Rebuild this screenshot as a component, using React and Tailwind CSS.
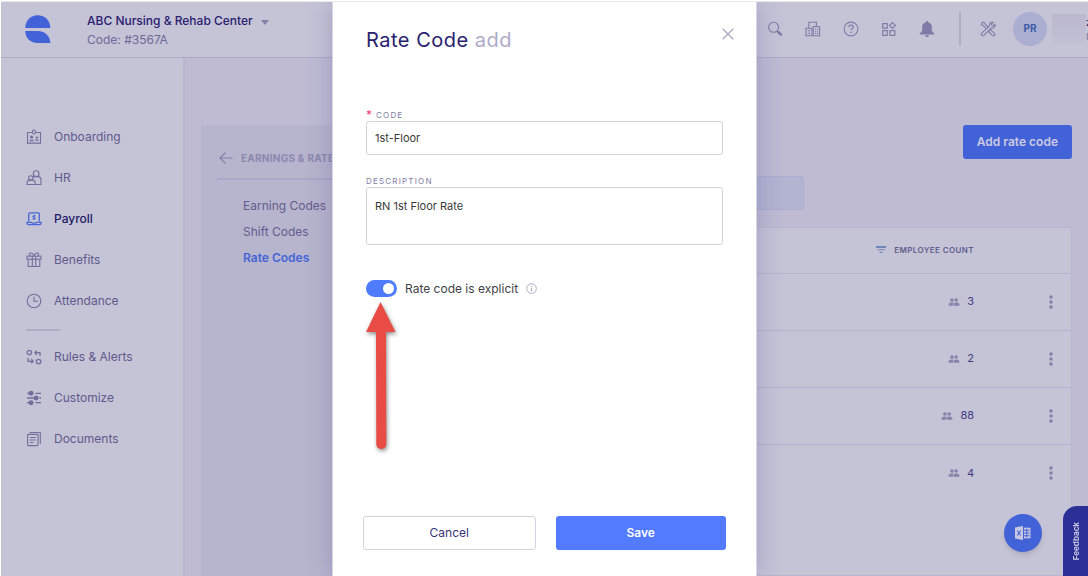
import { useState } from 'react'

const NAV_MAIN = [
  { label: 'Onboarding', icon: BadgeIcon },
  { label: 'HR', icon: PeopleIcon },
  { label: 'Payroll', icon: PayrollIcon, active: true },
  { label: 'Benefits', icon: GiftIcon },
  { label: 'Attendance', icon: ClockIcon },
]

const NAV_EXTRA = [
  { label: 'Rules & Alerts', icon: RulesIcon },
  { label: 'Customize', icon: SlidersIcon },
  { label: 'Documents', icon: DocumentsIcon },
]

const SUB_NAV = [
  { label: 'Earning Codes' },
  { label: 'Shift Codes' },
  { label: 'Rate Codes', active: true },
]

const ROWS = [3, 2, 88, 4]

function Icon({ size = 16, children, ...props }) {
  return (
    <svg
      width={size}
      height={size}
      viewBox="0 0 16 16"
      fill="none"
      stroke="currentColor"
      strokeWidth="1.1"
      aria-hidden="true"
      className="shrink-0"
      {...props}
    >
      {children}
    </svg>
  )
}

function BadgeIcon() {
  return (
    <Icon>
      <path d="M6.2 3.5H1.5v10.6h13V3.5H9.8" />
      <rect x="6.6" y="1" width="2.8" height="4" rx="1.2" />
      <circle cx="5.6" cy="8" r="1" fill="currentColor" />
      <path d="M3.6 11.5h4M9.4 8.5h3M9.4 11h3" strokeWidth="1.3" />
    </Icon>
  )
}

function PeopleIcon() {
  return (
    <Icon>
      <circle cx="10.2" cy="3.7" r="2.9" />
      <circle cx="4.8" cy="7.9" r="2.2" />
      <path d="M1 14.5v-1.4c0-1.700 1.300-3 3-3h2.200c1.700 0 3 1.300 3 3v1.400z" />
      <path d="M9.200 14.500H15v-4.700c0-1.800-1.300-3.200-3.100-3.200H8.700c-.6 0-1.100.2-1.600.6" />
    </Icon>
  )
}

function PayrollIcon() {
  return (
    <Icon>
      <path d="M2.700 10.500V2.700c0-.5.4-.9.9-.9h8.800c.5 0 .9.400.9.900v7.800" strokeWidth="1.3" />
      <path d="M1 11.300h4.500l.6.900h3.800l.6-.9H15v.7c0 .9-.7 1.600-1.600 1.600H2.600c-.9 0-1.600-.7-1.600-1.600z" strokeWidth="1.3" />
      <path d="M9.400 4.800H7.500c-1.100 0-1.100 1.500 0 1.500h1c1.100 0 1.100 1.600 0 1.600H6.600M8 3.700v5.300" strokeWidth="1" />
    </Icon>
  )
}

function GiftIcon() {
  return (
    <Icon>
      <rect x="1" y="4.2" width="14" height="3" />
      <path d="M2.200 7.200v7.300h11.600V7.200M6.300 4.200v10.300M9.700 4.200v10.300" />
      <path d="M8 4C7 1.500 5.500.700 4.300 1.100 2.900 1.600 3 3.600 4.500 4M8 4c1-2.500 2.500-3.300 3.700-2.900 1.400.5 1.300 2.500-.2 2.900" />
    </Icon>
  )
}

function ClockIcon() {
  return (
    <Icon>
      <circle cx="8" cy="8" r="6.8" />
      <path d="M8 3.800V8.200h4" />
    </Icon>
  )
}

function RulesIcon() {
  return (
    <Icon strokeWidth="1.3">
      <circle cx="3.3" cy="3.5" r="2.2" />
      <circle cx="12.6" cy="12.5" r="2.2" />
      <path d="M14 7V3.700H9M10.900 1.700 8.900 3.700l2 2" />
      <path d="M2 9v3.300h5M5.200 10.300l2 2-2 2" />
    </Icon>
  )
}

function SlidersIcon() {
  return (
    <Icon strokeWidth="1.3">
      <path d="M1 3.300h6.500M9.500 3.300H15M1 8h11.500M13.500 8H15M1 12.700h6.500M9.500 12.700H15" />
      <circle cx="5" cy="3.3" r="1.8" fill="currentColor" />
      <circle cx="10" cy="8" r="1.8" fill="currentColor" />
      <circle cx="5" cy="12.7" r="1.8" fill="currentColor" />
    </Icon>
  )
}

function DocumentsIcon() {
  return (
    <Icon>
      <rect x="1.6" y="3.4" width="10.4" height="11.2" rx=".6" />
      <path d="M3.500 1.500h10.800v11.500M3.800 6.500h6M3.800 9h6M3.800 11.500h3.700" />
    </Icon>
  )
}

function SearchIcon() {
  return (
    <Icon>
      <circle cx="6.6" cy="6.3" r="5" />
      <path d="M10 10.200l1.500 1.300" />
      <path d="M11.500 11.300l2.400 2.100" strokeWidth="2.6" strokeLinecap="round" />
    </Icon>
  )
}

function BuildingsIcon() {
  return (
    <Icon>
      <path d="M1 14.700V7.200h6v7.500zM3.800 7.200V1.200h7.600v4.200" />
      <path d="M8.300 14.700V5.500h6.300v9.200z" />
      <path d="M2.800 9.800h2.400M2.800 12.200h2.400M10 8h1.200M12 8h1.200M10 10.200h1.200M12 10.200h1.200M10 12.400h1.200M12 12.400h1.200" />
    </Icon>
  )
}

function HelpIcon() {
  return (
    <Icon>
      <circle cx="8" cy="8" r="6.9" />
      <path d="M5.900 6.200c0-2.700 4.300-2.700 4.300 0 0 1.500-2.100 1.500-2.100 3.100" strokeWidth="1.2" />
      <circle cx="8.1" cy="11.3" r=".5" fill="currentColor" strokeWidth=".5" />
    </Icon>
  )
}

function AppsIcon() {
  return (
    <Icon strokeWidth="1.2">
      <rect x="1.7" y="2.6" width="4.5" height="4.5" />
      <rect x="1.7" y="9.6" width="4.5" height="4.8" />
      <rect x="9" y="9.6" width="4.8" height="4.8" />
      <path d="M11.500 1.700l2.900 2.900-2.900 2.900-2.900-2.900z" />
    </Icon>
  )
}

function BellIcon() {
  return (
    <Icon fill="currentColor" stroke="none">
      <path d="M8 0c-.7 0-1.100.500-1.100 1.200C4.500 1.800 3.100 3.700 3.100 6.200v3.900L.8 12.400v1h14.400v-1l-2.300-2.300V6.200c0-2.500-1.400-4.400-3.800-5C9.100.5 8.700 0 8 0zM6 14.200c0 1.100.9 1.800 2 1.800s2-.7 2-1.800z" />
    </Icon>
  )
}

function ToolsIcon() {
  return (
    <Icon>
      <path d="M6.300 7.700 3 4.400l-1.700-.9.9-1.900 1.900-.3L5 3l3 3.200" />
      <path d="M9.300 9.200l1.500-.4 3.600 3.500c1.300 1.500-.6 3.200-2 2L8.800 11z" />
      <path d="M1.700 12.200 9.400 5.100c-.6-2.300 1.300-4.400 3.700-3.800l-1.700 1.900.5 1.400 1.500.4 1.600-1.600c.6 2.400-1.600 4.200-3.800 3.600l-7.300 7.300c-1.300 1.200-3.400-.8-2.200-2.100z" />
    </Icon>
  )
}

function GroupIcon() {
  return (
    <svg width="12" height="12" viewBox="0 0 12 12" fill="#8682ab" aria-hidden="true">
      <circle cx="3.9" cy="4" r="1.8" />
      <circle cx="8.1" cy="4" r="1.8" />
      <path d="M.6 9.700V8.400C.6 7.100 2 6.400 3.800 6.400c.8 0 1.400.1 1.900.4-.6.500-.8 1-.8 1.600v1.300zM5.600 9.700V8.400c0-1.300 1-2 2.600-2 1.800 0 3.200.7 3.200 2v1.300z" />
    </svg>
  )
}

function Logo() {
  return (
    <svg width="26" height="28" viewBox="0 0 26 28" fill="#4262d8" aria-hidden="true">
      <path d="M.3 13C.3 5.700 5.600.3 12.800.3S25.300 5.700 25.300 13z" />
      <path d="M.3 16h12.500c7.200 0 12.500 5 12.500 12H12.800C5.600 28 .3 23.200.3 16z" />
    </svg>
  )
}

function Header() {
  const actions = [
    { label: 'Search', icon: SearchIcon },
    { label: 'Facilities', icon: BuildingsIcon },
    { label: 'Help', icon: HelpIcon },
    { label: 'Apps', icon: AppsIcon },
    { label: 'Notifications', icon: BellIcon },
  ]
  return (
    <header className="flex h-14 shrink-0 items-center border-b border-[#afabc8] bg-[#c5c3d6] pb-0.5 pl-6">
      <Logo />
      <button className="ml-9 flex items-start gap-2 pt-0.5 text-left text-xs leading-[19px]">
        <span>
          <span className="block font-medium text-[#29206f]">ABC Nursing &amp; Rehab Center</span>
          <span className="block text-[#6e6996]">Code: #3567A</span>
        </span>
        <svg width="8" height="5" viewBox="0 0 8 5" fill="#8682ab" aria-hidden="true" className="mt-[9px]">
          <path d="M0 0h8L4 5z" />
        </svg>
      </button>

      <div className="ml-auto flex items-center text-[#7f7ba6]">
        <div className="flex gap-[22px]">
          {actions.map(({ label, icon: ActionIcon }) => (
            <button key={label} aria-label={label}>
              <ActionIcon />
            </button>
          ))}
        </div>
        <div className="ml-6 h-[34px] w-0.5 bg-[#aeabc3]" />
        <button aria-label="Tools" className="ml-[19px]">
          <ToolsIcon />
        </button>
        <div className="ml-[17px] flex size-[34px] items-center justify-center rounded-full bg-[#abaed0] text-[10px] font-bold text-[#3d5ba9]">
          PR
        </div>
        <div className="ml-[5px] h-[29px] w-[34px] bg-linear-to-b from-[#bbb8ce] to-[#c2c0d4]" />
        <div className="w-0.5 overflow-hidden text-[11px] leading-[14px]">
          <div className="font-medium text-[#29206f]">z</div>
          <div>r</div>
        </div>
      </div>
    </header>
  )
}

function NavItem({ label, icon: ItemIcon, active }) {
  return (
    <a
      href="#"
      className={`flex h-[41px] items-center gap-3 text-xs ${active ? 'font-medium text-[#221968]' : 'text-[#5f5a8c]'}`}
    >
      <span className={active ? 'text-[#4667d8]' : 'text-[#736e9c]'}>
        <ItemIcon />
      </span>
      {label}
    </a>
  )
}

function Sidebar() {
  return (
    <nav className="w-[184px] shrink-0 border-r-2 border-[#b9b6d0] bg-[#c5c3d6] pt-[58px] pl-[25px]">
      {NAV_MAIN.map(item => <NavItem key={item.label} {...item} />)}
      <div className="mt-2 mb-[5px] h-0.5 w-[34px] bg-[#aeabc4]" />
      {NAV_EXTRA.map(item => <NavItem key={item.label} {...item} />)}
    </nav>
  )
}

function SubNav() {
  return (
    <aside className="w-[240px] shrink-0 bg-[#b7b4cd] px-4">
      <a href="#" className="flex h-[55px] items-center gap-2 border-b-2 border-[#aba8c5] pt-[13px] pl-0.5 whitespace-nowrap">
        <svg width="14" height="12" viewBox="0 0 14 12" fill="none" stroke="#8581ab" strokeWidth="1.2" aria-hidden="true">
          <path d="M13.500 6H1M6.500.5 1 6l5.500 5.500" />
        </svg>
        <span className="text-[10px] font-bold tracking-wide text-[#8c88b0]">EARNINGS &amp; RATES</span>
      </a>
      <ul className="pt-[13px] pl-[26px] text-xs leading-[26px]">
        {SUB_NAV.map(({ label, active }) => (
          <li key={label}>
            <a href="#" className={active ? 'font-semibold text-[#4464d8]' : 'text-[#625d8e]'}>{label}</a>
          </li>
        ))}
      </ul>
    </aside>
  )
}

function RateCodes() {
  return (
    <main className="flex min-w-0 flex-1 flex-col">
      <button className="h-[34px] self-end rounded-[3px] bg-[#4262d8] px-[14px] text-xs font-semibold text-[#cccbe0]">
        Add rate code
      </button>
      <input
        type="search"
        aria-label="Search"
        className="mt-[17px] h-[34px] w-[347px] rounded-[3px] border border-[#abadd0] bg-[#b3b4d2]"
      />
      <div className="mt-[17px] flex-1 border border-[#b9b6d0] bg-[#c5c3d6]">
        <table className="w-full border-collapse">
          <thead>
            <tr className="h-[45px] border-b border-[#b5b2cd]">
              <th className="text-[8px] font-semibold tracking-wider text-[#625d8e]">
                <span className="flex items-center justify-end gap-2">
                  <svg width="10" height="8" viewBox="0 0 10 8" fill="none" aria-hidden="true">
                    <path d="M0 1h10" stroke="#4263a8" strokeWidth="1.3" />
                    <path d="M1.500 3.800h7M3.500 6.500h3" stroke="#6f82b5" />
                  </svg>
                  EMPLOYEE COUNT
                </span>
              </th>
              <td className="w-[97px]" />
            </tr>
          </thead>
          <tbody>
            {ROWS.map((count, i) => (
              <tr key={i} className="h-[57px] border-b border-[#b5b2cd] last:border-b-0">
                <td className="text-[11px] text-[#433b80]">
                  <span className="flex items-center justify-end gap-[7px]">
                    <GroupIcon />
                    {count}
                  </span>
                </td>
                <td className="pr-[18px]">
                  <button aria-label="Row actions" className="ml-auto block">
                    <svg width="4" height="14" viewBox="0 0 4 14" fill="#817da7" aria-hidden="true">
                      <circle cx="2" cy="2" r="1.7" />
                      <circle cx="2" cy="7" r="1.7" />
                      <circle cx="2" cy="12" r="1.7" />
                    </svg>
                  </button>
                </td>
              </tr>
            ))}
          </tbody>
        </table>
      </div>
    </main>
  )
}

function RateCodeDialog() {
  const [code, setCode] = useState('1st-Floor')
  const [description, setDescription] = useState('RN 1st Floor Rate')
  const [explicit, setExplicit] = useState(true)

  return (
    <div
      role="dialog"
      aria-labelledby="dialog-title"
      className="relative flex w-[425px] flex-col border-x border-[#d8d6e6] bg-white shadow-[0_0_24px_rgba(60,50,130,0.25)]"
    >
      <div className="flex items-start justify-between px-[33px] pt-[22px]">
        <h1 id="dialog-title" className="text-xl leading-8 tracking-wide text-[#29206f]">
          Rate Code <span className="text-[#aeabc8]">add</span>
        </h1>
        <button aria-label="Close" className="-mr-[15px] p-1">
          <svg width="12" height="12" viewBox="0 0 12 12" stroke="#aaa7c4" strokeWidth="1.3" aria-hidden="true">
            <path d="M.7.7l10.600 10.600M11.300.7.7 11.300" />
          </svg>
        </button>
      </div>

      <form className="flex flex-1 flex-col px-[33px] pt-[53px]" onSubmit={e => e.preventDefault()}>
        <label htmlFor="code" className="flex h-3 items-center gap-1 text-[8px] tracking-[0.15em] text-[#7f7ba6]">
          <span className="text-xs tracking-normal text-[#ef3e7d]">*</span>
          CODE
        </label>
        <input
          id="code"
          value={code}
          onChange={e => setCode(e.target.value)}
          className="h-[34px] rounded-[3px] border border-[#d3d3e2] px-2 text-[11px] text-[#3a3a3a]"
        />

        <label htmlFor="description" className="mt-5 flex h-3 items-center text-[8px] tracking-[0.15em] text-[#7f7ba6]">
          DESCRIPTION
        </label>
        <textarea
          id="description"
          value={description}
          onChange={e => setDescription(e.target.value)}
          className="h-[58px] resize-none rounded-[3px] border border-[#d3d3e2] px-2 py-[10px] text-[11px] leading-4 text-[#3a3a3a]"
        />

        <div className="mt-[35px] flex items-center">
          <input
            id="explicit"
            type="checkbox"
            role="switch"
            checked={explicit}
            onChange={e => setExplicit(e.target.checked)}
            className="flex h-[17px] w-[31px] appearance-none items-center rounded-full bg-[#b5b2cd] px-[3px] before:size-[11px] before:rounded-full before:bg-white checked:justify-end checked:bg-[#4f7bff]"
          />
          <label htmlFor="explicit" className="ml-2 text-xs leading-[17px] text-[#3f3f46]">
            Rate code is explicit
          </label>
          <svg width="11" height="11" viewBox="0 0 11 11" fill="none" stroke="#aeabc8" aria-hidden="true" className="ml-2">
            <circle cx="5.5" cy="5.5" r="4.8" />
            <path d="M5.500 5v3.200M5.500 2.800v1.200" strokeWidth="1.2" />
          </svg>
        </div>
      </form>

      <div className="flex gap-5 px-[30px] pb-[26px] text-xs">
        <button className="h-[34px] flex-1 rounded-[3px] border border-[#d3d3e2] text-[#3b3379]">Cancel</button>
        <button className="h-[34px] flex-1 rounded-[3px] bg-[#527bff] font-semibold text-white">Save</button>
      </div>

      {/* Arrow pointing at the switch */}
      <svg
        width="40"
        height="160"
        viewBox="0 0 40 160"
        fill="#e94b45"
        aria-hidden="true"
        className="absolute top-[298px] left-7 drop-shadow-[1px_2px_2px_rgba(0,0,0,0.45)]"
      >
        <path d="M19.500 2 34.500 32H25l.3 112c0 6.500-10 6.500-10 0L15 32H5z" />
      </svg>
    </div>
  )
}

export default function App() {
  return (
    <div className="flex min-h-screen flex-col bg-white pt-px pl-px font-['Inter',sans-serif]">
      <div className="relative flex flex-1 flex-col overflow-hidden border-t border-[#e9e8ef] bg-[#bebbd3]">
        <Header />
        <div className="flex flex-1">
          <Sidebar />
          <div className="flex min-w-0 flex-1 gap-4 pt-[67px] pr-4 pl-4">
            <SubNav />
            <RateCodes />
          </div>
        </div>

        <button
          aria-label="Export to Excel"
          className="absolute right-[46px] bottom-6 flex size-[38px] items-center justify-center rounded-full bg-[#4262d8] shadow-md"
        >
          <svg width="16" height="14" viewBox="0 0 16 14" aria-hidden="true">
            <path d="M0 1.500 8 0v14l-8-1.500z" fill="#c9c8e2" />
            <path d="M2.300 4.500l3.400 5M5.700 4.500l-3.400 5" stroke="#4262d8" strokeWidth="1.1" />
            <path d="M9 1.700h6.500v10.600H9" fill="#c9c8e2" />
            <path d="M9 4.200h5.500M9 7h5.500M9 9.800h5.500M11.700 2.700v8.600" stroke="#4262d8" strokeWidth="1" />
          </svg>
        </button>
        <button className="absolute right-0 bottom-0 flex h-[70px] w-[25px] items-center justify-center rounded-tl-[14px] bg-[#2b2f96] text-[8px] font-bold text-[#c9c8e2]">
          <span className="rotate-180 [writing-mode:vertical-rl]">Feedback</span>
        </button>

        <div className="absolute inset-0 flex justify-center">
          <RateCodeDialog />
        </div>
      </div>
    </div>
  )
}
